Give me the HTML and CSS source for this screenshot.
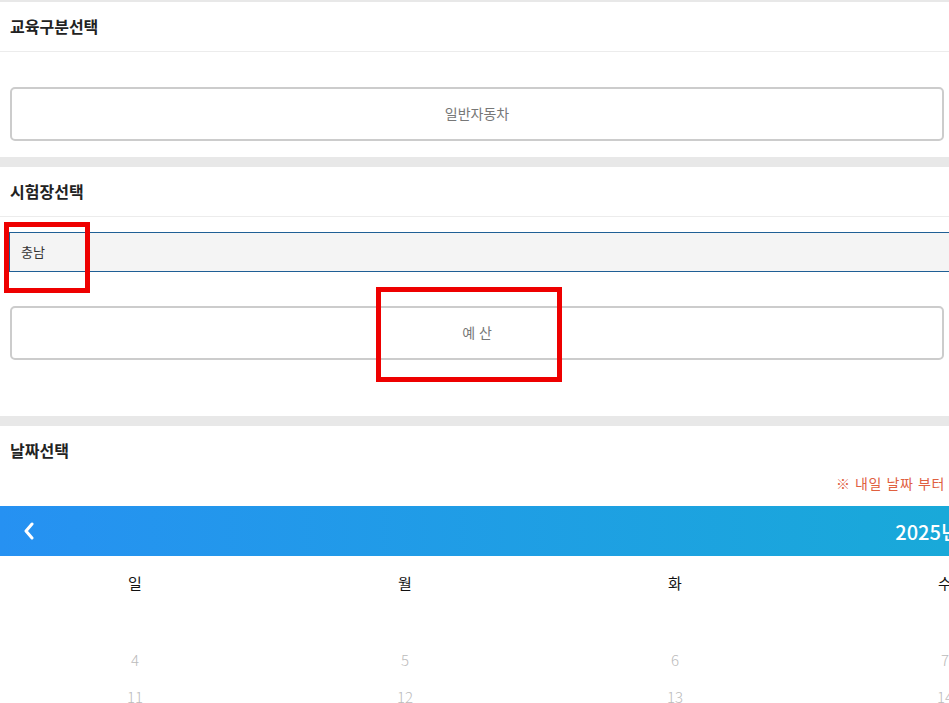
FILE: index.html
```html
<!DOCTYPE html>
<html lang="ko">
<head>
<meta charset="utf-8">
<title>시험장 예약</title>
<link rel="stylesheet" href="styles.css">
</head>
<body>
<div class="page">
  <div class="band band-top"></div>

  <section class="sec">
    <h2 class="sec-title">교육구분선택</h2>
    <div class="sec-body body-1">
      <button class="opt-btn">일반자동차</button>
    </div>
  </section>

  <div class="band"></div>

  <section class="sec">
    <h2 class="sec-title">시험장선택</h2>
    <div class="sec-body body-2">
      <div class="select">충남</div>
      <button class="opt-btn">예 산</button>
    </div>
  </section>

  <div class="band"></div>

  <section class="sec">
    <h2 class="sec-title no-line">날짜선택</h2>
    <p class="note">※ 내일 날짜 부터</p>
    <div class="calendar">
      <div class="cal-head">
        <span class="cal-prev">
          <svg width="14" height="18" viewBox="0 0 14 18"><path d="M10 2 L4 9 L10 16" fill="none" stroke="#fff" stroke-width="3" stroke-linecap="round" stroke-linejoin="round"/></svg>
        </span>
        <span class="cal-title">2025년 5월</span>
        <span class="cal-next"></span>
      </div>
      <div class="cal-grid">
        <div class="wd">일</div><div class="wd">월</div><div class="wd">화</div><div class="wd">수</div><div class="wd">목</div><div class="wd">금</div><div class="wd">토</div>
        <div class="d"></div><div class="d"></div><div class="d"></div><div class="d"></div><div class="d">1</div><div class="d">2</div><div class="d">3</div>
        <div class="d">4</div><div class="d">5</div><div class="d">6</div><div class="d">7</div><div class="d">8</div><div class="d">9</div><div class="d">10</div>
        <div class="d">11</div><div class="d">12</div><div class="d">13</div><div class="d">14</div><div class="d">15</div><div class="d">16</div><div class="d">17</div>
      </div>
    </div>
  </section>

  <div class="mark mark-1"></div>
  <div class="mark mark-2"></div>
</div>
</body>
</html>
```
FILE: styles.css
```css
html, body {
  margin: 0;
  padding: 0;
  overflow: hidden;
  background: #fff;
}
body {
  font-family: "Noto Sans CJK KR", "Noto Sans", sans-serif;
  color: #222;
}
.page {
  position: relative;
  width: 949px;
}
.band {
  height: 10px;
  background: #e8e8e8;
}
.band-top {
  height: 2px;
}
.sec-title {
  margin: 0;
  height: 49px;
  line-height: 48px;
  padding: 0 10px;
  font-size: 16px;
  font-weight: 700;
  color: #222;
  border-bottom: 1px solid #ececec;
  white-space: nowrap;
}
.sec-title.no-line {
  border-bottom: none;
  height: 47px;
}
.sec-body {
  display: flex;
  flex-direction: column;
  padding: 0 5px 0 10px;
}
.body-1 {
  padding-top: 35px;
  padding-bottom: 16px;
}
.body-2 {
  padding-top: 15px;
  padding-bottom: 56px;
  gap: 34px;
}
.opt-btn {
  display: block;
  width: 934px;
  height: 54px;
  border: 2px solid #cccccc;
  border-radius: 5px;
  background: #fff;
  font-family: inherit;
  font-size: 14px;
  color: #777;
  padding: 0 0 3px;
}
.select {
  margin-left: -1px;
  width: 1000px;
  height: 38px;
  line-height: 37px;
  border: 1px solid #1f5f95;
  background: #f4f4f4;
  padding-left: 11px;
  font-size: 13px;
  color: #333;
  box-sizing: content-box;
}
.note {
  margin: 0 0 12px;
  line-height: 21px;
  padding-right: 4px;
  text-align: right;
  font-size: 14px;
  letter-spacing: 0.6px;
  color: #e0603f;
  white-space: nowrap;
}
.calendar {
  width: 1890px;
}
.cal-head {
  height: 50px;
  display: flex;
  align-items: center;
  justify-content: space-between;
  padding: 0 22px;
  background: linear-gradient(90deg, #2691f2 0%, #19a9d9 50%, #12bfc4 100%);
  color: #fff;
}
.cal-prev {
  display: flex;
  width: 20px;
}
.cal-next {
  width: 20px;
}
.cal-title {
  font-size: 20px;
  font-weight: 500;
}
.cal-grid {
  display: grid;
  grid-template-columns: repeat(7, 270px);
  grid-template-rows: 48px;
  grid-auto-rows: 37px;
}
.wd {
  padding-top: 6px;
  line-height: 42px;
  text-align: center;
  font-size: 15px;
  color: #111;
}
.d {
  line-height: 37px;
  text-align: center;
  font-size: 15px;
  font-weight: 300;
  color: #bbbbbb;
}
.mark {
  position: absolute;
  border: 5px solid #ee0000;
  box-sizing: border-box;
}
.mark-1 {
  left: 4px;
  top: 222px;
  width: 86px;
  height: 71px;
}
.mark-2 {
  left: 376px;
  top: 287px;
  width: 186px;
  height: 95px;
}
```
